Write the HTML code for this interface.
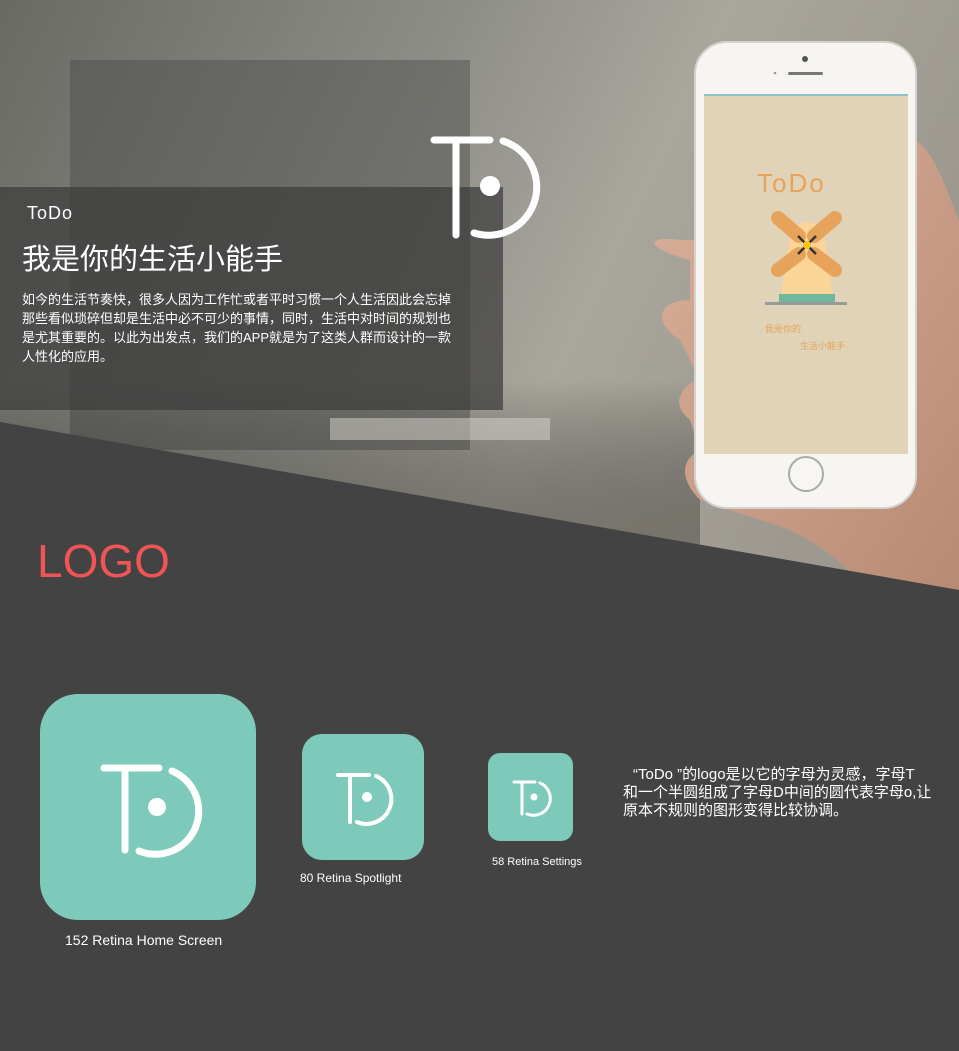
<!DOCTYPE html>
<html><head><meta charset="utf-8"><style>
body{margin:0;width:959px;height:1051px;overflow:hidden;position:relative;background:#434343;font-family:"Liberation Sans","Noto Sans CJK SC",sans-serif}
.abs{position:absolute;white-space:nowrap}
</style></head><body>
<svg class="abs" style="left:0;top:0" width="959" height="1051">
<defs>
<linearGradient id="bg" x1="0" y1="0" x2="1" y2="0.3">
<stop offset="0" stop-color="#6a6a65"/><stop offset="0.45" stop-color="#8e8e88"/><stop offset="0.7" stop-color="#a9a69d"/><stop offset="1" stop-color="#9d9990"/>
</linearGradient>
<linearGradient id="fl" x1="0" y1="0" x2="0" y2="1">
<stop offset="0" stop-color="#000" stop-opacity="0"/><stop offset="1" stop-color="#7a766c" stop-opacity="0.8"/>
</linearGradient>
<linearGradient id="skin" x1="0" y1="0" x2="1" y2="1">
<stop offset="0" stop-color="#d9b09a"/><stop offset="1" stop-color="#b88a74"/>
</linearGradient>
</defs>
<rect width="959" height="600" fill="url(#bg)"/>
<rect x="70" y="60" width="400" height="390" fill="#4a4a47" opacity="0.45"/>
<rect x="0" y="380" width="700" height="220" fill="url(#fl)"/>
<rect x="330" y="418" width="220" height="22" fill="#d8d6d0" opacity="0.5"/>
<path d="M915 140 C935 150 950 200 959 220 L959 600 L870 600 C850 560 800 530 760 520 L700 500 C680 480 680 460 700 450 L690 420 C665 400 690 380 700 380 L680 340 C650 320 660 300 690 300 L690 260 C650 250 640 235 680 240 L700 240 L915 240 Z" fill="url(#skin)"/>
<path d="M0 422 L959 590 L959 1051 L0 1051 Z" fill="#434343"/>
<rect x="0" y="187" width="503" height="223" fill="#3c3c3c" opacity="0.72"/>
<g fill="none" stroke="#fff" stroke-width="7" stroke-linecap="round">
<line x1="434" y1="140" x2="490" y2="140"/><line x1="456" y1="140" x2="456" y2="235"/>
<path d="M503 141 A45 45 0 0 1 474 233"/>
</g>
<circle cx="490" cy="186" r="10" fill="#fff"/>
<rect x="695" y="42" width="221" height="466" rx="32" fill="#f6f5f2" stroke="#d4d2cc" stroke-width="2"/>
<rect x="704" y="95" width="204" height="359" fill="#e0d3b8"/>
<rect x="704" y="94" width="204" height="2" fill="#8cc4c8"/>
<circle cx="805" cy="59" r="3" fill="#555"/>
<rect x="788" y="72" width="35" height="3" rx="1.5" fill="#777"/>
<circle cx="775" cy="73" r="1.3" fill="#999"/>
<circle cx="806" cy="474" r="17" fill="#f7f6f3" stroke="#aaa" stroke-width="2"/>
<path d="M787 256 Q790 222 807 222 Q824 222 827 256 L833 296 L781 296 Z" fill="#fbd597"/>
<rect x="779" y="294" width="56" height="8" fill="#6fb79d"/>
<rect x="765" y="302" width="82" height="3" fill="#999"/>
<g stroke="#e8a35a" stroke-width="14" stroke-linecap="round">
<line x1="778" y1="218" x2="799" y2="236"/><line x1="835" y1="218" x2="814" y2="236"/>
<line x1="778" y1="270" x2="799" y2="254"/><line x1="835" y1="270" x2="814" y2="254"/>
</g>
<g stroke="#333" stroke-width="2.5"><line x1="798" y1="236" x2="816" y2="254"/><line x1="816" y1="236" x2="798" y2="254"/></g>
<circle cx="807" cy="245" r="4" fill="#f5c518"/>
<rect x="40" y="694" width="216" height="226" rx="38" fill="#7ecaba"/>
<g fill="none" stroke="#fff" stroke-width="7" stroke-linecap="round">
<line x1="104" y1="768" x2="159" y2="768"/><line x1="125" y1="768" x2="125" y2="850"/>
<path d="M172 771 A41 41 0 0 1 139 851"/>
</g>
<circle cx="157" cy="807" r="9" fill="#fff"/>
<rect x="302" y="734" width="122" height="126" rx="20" fill="#7ecaba"/>
<g fill="none" stroke="#fff" stroke-width="4" stroke-linecap="round">
<line x1="338" y1="775" x2="369" y2="775"/><line x1="350" y1="775" x2="350" y2="822"/>
<path d="M376 776 A23 23 0 0 1 357 822"/>
</g>
<circle cx="367" cy="797" r="5" fill="#fff"/>
<rect x="488" y="753" width="85" height="88" rx="12" fill="#7ecaba"/>
<g fill="none" stroke="#fff" stroke-width="3" stroke-linecap="round">
<line x1="514" y1="782" x2="535" y2="782"/><line x1="522" y1="782" x2="522" y2="814"/>
<path d="M540 783 A16 16 0 0 1 527 814"/>
</g>
<circle cx="534" cy="797" r="3.5" fill="#fff"/>
</svg>
<div class="abs" style="left:27px;top:203px;color:#fff;font-size:18px;letter-spacing:1px">ToDo</div>
<div class="abs" style="left:22px;top:236px;color:#fff;font-size:29px">我是你的生活小能手</div>
<div class="abs" style="left:22px;top:290px;color:#fff;font-size:13px;line-height:19px">如今的生活节奏快，很多人因为工作忙或者平时习惯一个人生活因此会忘掉<br>那些看似琐碎但却是生活中必不可少的事情，同时，生活中对时间的规划也<br>是尤其重要的。以此为出发点，我们的APP就是为了这类人群而设计的一款<br>人性化的应用。</div>
<div class="abs" style="left:757px;top:168px;color:#e8a35a;font-size:26px;letter-spacing:2px">ToDo</div>
<div class="abs" style="left:765px;top:322px;color:#e8a35a;font-size:9px">我是你的</div>
<div class="abs" style="left:800px;top:339px;color:#e8a35a;font-size:9px">生活小能手</div>
<div class="abs" style="left:37px;top:534px;color:#f05454;font-size:46px">LOGO</div>
<div class="abs" style="left:65px;top:932px;color:#fff;font-size:14px">152 Retina Home Screen</div>
<div class="abs" style="left:300px;top:871px;color:#fff;font-size:12px">80 Retina Spotlight</div>
<div class="abs" style="left:492px;top:856px;color:#fff;font-size:11px">58 Retina Settings</div>
<div class="abs" style="left:623px;top:766px;color:#fff;font-size:15px;line-height:18px"><span style="padding-left:10px">“ToDo ”的logo是以它的字母为灵感，字母T</span><br>和一个半圆组成了字母D中间的圆代表字母o,让<br>原本不规则的图形变得比较协调。</div>
</body></html>
